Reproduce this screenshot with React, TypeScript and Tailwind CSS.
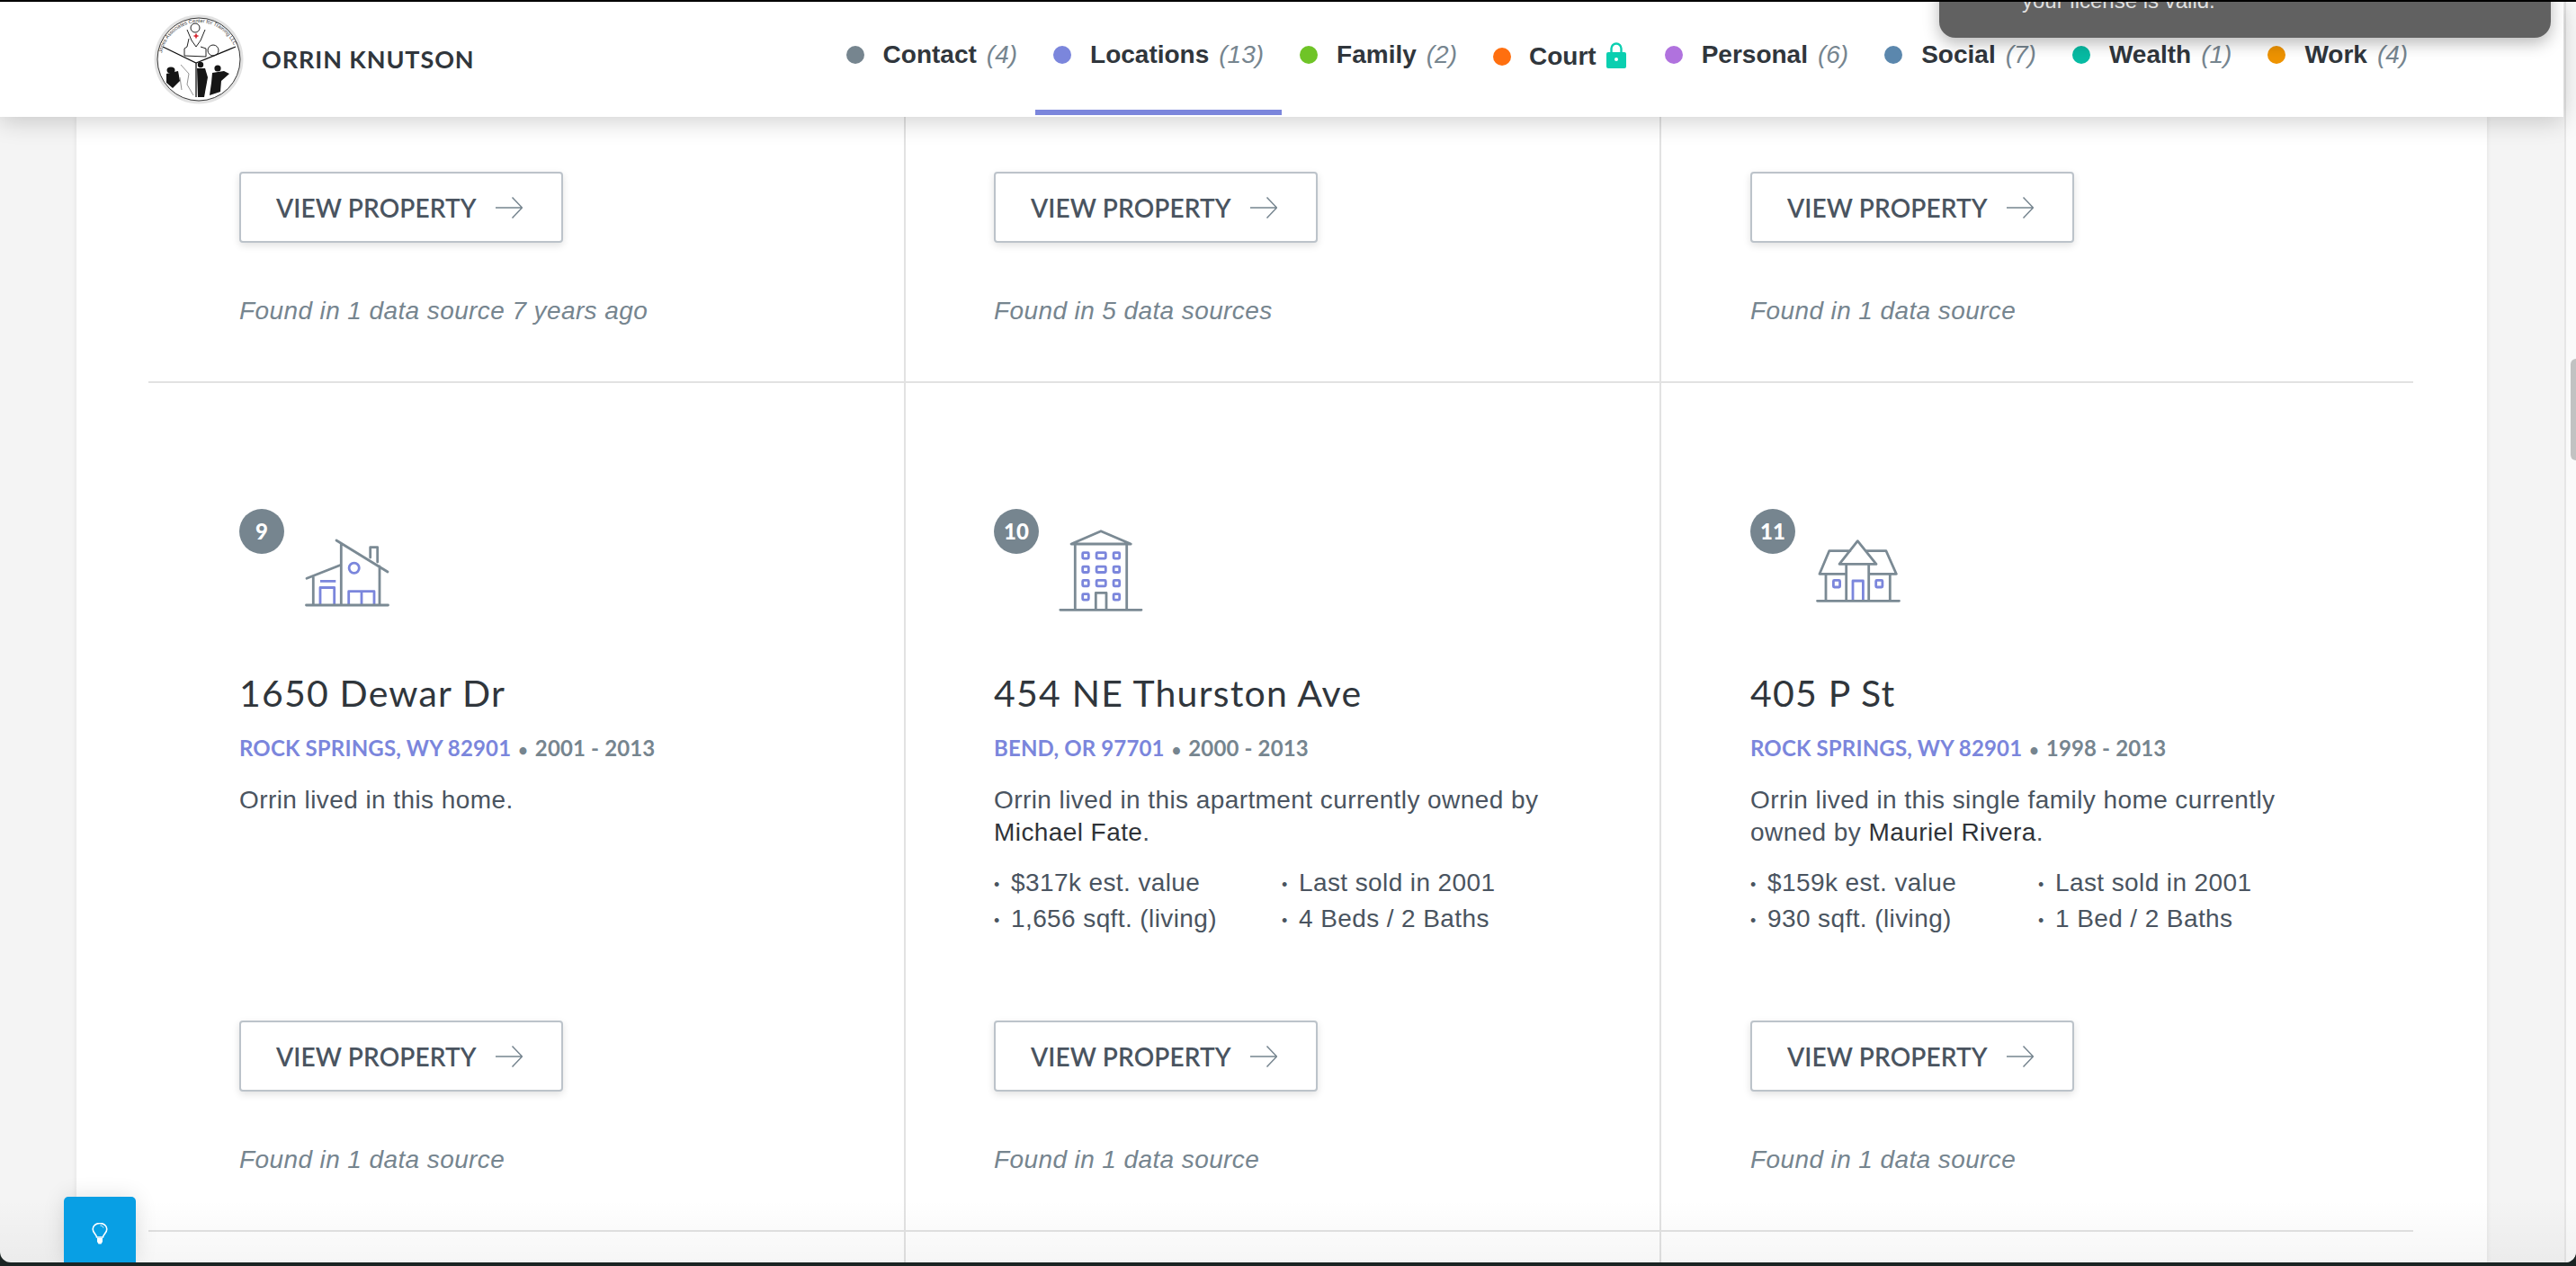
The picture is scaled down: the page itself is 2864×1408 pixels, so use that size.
import type { ReactNode } from "react";

const navItems = [
  { label: "Contact", count: 4, dot: "bg-[#76858f]" },
  { label: "Locations", count: 13, dot: "bg-[#7b86dc]", active: true },
  { label: "Family", count: 2, dot: "bg-[#6fc427]" },
  { label: "Court", dot: "bg-[#ff6f0f]", locked: true },
  { label: "Personal", count: 6, dot: "bg-[#b072de]" },
  { label: "Social", count: 7, dot: "bg-[#5b87ad]" },
  { label: "Wealth", count: 1, dot: "bg-[#07bba3]" },
  { label: "Work", count: 4, dot: "bg-[#ee9300]" },
];

const Logo = () => (
  <svg viewBox="0 0 100 100" className="w-[100px] h-[100px] shrink-0">
    <defs>
      <path id="logo-arc" d="M 9 43 A 42 42 0 0 1 91 41" />
    </defs>
    <circle cx="50" cy="50" r="49.5" fill="#e2e2e2" />
    <circle cx="50" cy="50" r="46" fill="#fff" stroke="#222" strokeWidth="0.9" />
    <text fontSize="5.8" fill="#333" fontFamily="'Liberation Sans', sans-serif">
      <textPath href="#logo-arc">Jones Associates Center for Training LLC</textPath>
    </text>
    <path d="M10 36 L47 54 L91 36 M47 54 L47 92" stroke="#111" strokeWidth="1.3" fill="none" />
    <g stroke="#222" strokeWidth="1" fill="none">
      <circle cx="46" cy="15" r="5" />
      <path d="M37 17 L42 29 L47 36 L52 29 L57 17 M39 27 L37 36 L34 38 L34 46 L58 47 L58 38 L52 36" />
      <circle cx="66" cy="40" r="6" />
    </g>
    <path d="M44.5 24 H49.5 M47 21.5 V26.5" stroke="#d5202a" strokeWidth="1.6" />
    <g fill="#151515">
      <ellipse cx="19" cy="62" rx="4.5" ry="3.5" />
      <path d="M14 66 L27 63 L29 74 L21 82 L14 76 Z" />
      <circle cx="52" cy="56" r="3.2" />
      <path d="M48 60 L57 60 L60 70 L56 92 L49 92 Z" />
      <circle cx="71" cy="60" r="3.6" />
      <path d="M65 65 L78 63 L84 66 L75 74 L74 86 L62 90 L64 76 Z" />
    </g>
    <path d="M30 56 L39 66 L37 78 L44 90 M29 70 L31 84" stroke="#777" strokeWidth="0.8" fill="none" />
  </svg>
);

const LockIcon = () => (
  <svg viewBox="0 0 22 29" className="w-[22px] h-[29px] ml-[11px] mr-[3px] -mt-[3px]">
    <path d="M5.5 13 V7 a5.5 5.5 0 0 1 11 0 V13" stroke="#0acfb0" strokeWidth="2.4" fill="none" />
    <rect x="0" y="11" width="22" height="18" rx="2" fill="#0acfb0" />
    <circle cx="11" cy="19" r="2" fill="#fff" />
  </svg>
);

const ArrowIcon = () => (
  <svg viewBox="0 0 30 24" className="w-[30px] h-[24px]" fill="none" stroke="#76858f" strokeWidth="1.5">
    <path d="M0 12 H29.5 M18.5 0.5 L29.5 12 L18.5 23.5" />
  </svg>
);

const BulbIcon = () => (
  <svg viewBox="0 0 18 24" className="w-[18px] h-[24px]" fill="none" stroke="#fff" strokeWidth="1.6">
    <path d="M5.5 16 C5 12.5 1.2 11 1.2 7 a7.8 6.6 0 0 1 15.6 0 C16.8 11 13 12.5 12.5 16 Z" />
    <path d="M6 17 H12 V21 L10.5 23.5 H7.5 L6 21 Z" fill="#fff" stroke="none" />
    <path d="M9.5 3 C11 3 12.5 4 13 5.5" strokeWidth="1" />
  </svg>
);

const grey = { fill: "none", stroke: "#7b8a94", strokeWidth: 2.8, strokeLinecap: "round", strokeLinejoin: "round" } as const;
const accent = { fill: "none", stroke: "#7b86dc", strokeWidth: 2.8, strokeLinejoin: "round" } as const;

const HouseIcon = () => (
  <svg viewBox="92 22 100 100" className="w-[100px] h-[100px]">
    <g {...accent}>
      <circle cx="152.7" cy="71.7" r="5.6" />
      <path d="M115 86.3 H132.3 M115 113 V93.5 H130.7 V113 M146.7 113 V97.7 H175 V113 M161 97.7 V113" />
    </g>
    <path
      {...grey}
      d="M99.5 113 H190.5 M133 41 L190 76 M138.3 45 V113 M181 70 V113 M100 83.3 L138 68.3 M107.3 81 V113 M170.7 60 V48.7 H178.7 V65"
    />
  </svg>
);

const BuildingIcon = () => {
  const rows = [44.7, 60.1, 75.4, 90.7];
  return (
    <svg viewBox="92 12 100 100" className="w-[100px] h-[100px]">
      <g {...accent}>
        {rows.map((y, i) => (
          <g key={y}>
            <rect x="123.7" y={y} width="6.6" height="6.4" rx="1" />
            {i < 3 && <rect x="139.1" y={y} width="10.2" height="6.4" rx="1" />}
            <rect x="158.1" y={y} width="6.6" height="6.4" rx="1" />
          </g>
        ))}
      </g>
      <path
        {...grey}
        d="M98.8 108.3 H189 M111 35 L144 20.7 L177.3 35 Z M115.3 35 V108.3 M172.7 35 V108.3 M138.3 108.3 V89.3 H150 V108.3"
      />
    </svg>
  );
};

const GableIcon = () => (
  <svg viewBox="92 12 100 100" className="w-[100px] h-[100px]">
    <g {...accent}>
      <rect x="117.4" y="75.4" width="7.2" height="7.6" rx="1" />
      <rect x="164.7" y="75.4" width="7.2" height="7.6" rx="1" />
      <path d="M139 98 V76 H150.4 V98" />
    </g>
    <path
      {...grey}
      d="M99.5 98.3 H190.5 M124 57.3 L144.3 31.7 L165 57.3 Z M136 42.7 H112.7 L102 68.3 H131.7 M154 42.7 H176 L187.3 68.3 H156.7 M109 68.3 V98.3 M131.7 57.3 V98.3 M156.7 57.3 V98.3 M180.3 68.3 V98.3"
    />
  </svg>
);

const Card = ({ foundIn, children, className }: { foundIn: string; children?: ReactNode; className: string }) => (
  <div className={`flex flex-col justify-end ${className}`}>
    {children}
    <button className="mt-auto flex items-center justify-between w-[360px] h-[79px] pl-[39px] pr-[43px] bg-white border-2 border-[#bcc3ca] rounded-[4px] shadow-[0_3px_8px_rgba(0,0,0,0.12)] font-['Lato',sans-serif] font-semibold text-[28px] text-[#4a5460] tracking-[0.1px]">
      VIEW PROPERTY
      <ArrowIcon />
    </button>
    <p className="mt-[58px] mb-[60px] h-[36px] leading-[36px] italic text-[28px] tracking-[0.4px] text-[#76858f]">{foundIn}</p>
  </div>
);

const Property = ({
  num,
  icon,
  street,
  city,
  years,
  desc,
  owner,
  facts,
}: {
  num: number;
  icon: ReactNode;
  street: string;
  city: string;
  years: string;
  desc: string;
  owner?: string;
  facts?: string[];
}) => (
  <>
    <div className="flex items-start h-[181px]">
      <span className="w-[50px] h-[50px] rounded-full bg-[#76858f] flex items-center justify-center font-['Lato',sans-serif] font-black text-[24px] text-white">
        {num}
      </span>
      <span className="ml-[17px] mt-[16px]">{icon}</span>
    </div>
    <h3 className="font-['Lato',sans-serif] text-[41px] tracking-[1.2px] leading-[48px] text-[#30363c]">{street}</h3>
    <p className="mt-[23px] font-['Lato',sans-serif] font-bold text-[24px] tracking-[0.15px] leading-[28px] text-[#76858f]">
      <span className="text-[#7b86dc]">{city}</span>
      <span className="mx-[8px] text-[18px]">•</span>
      {years}
    </p>
    <p className="mt-[24px] w-[640px] text-[28px] tracking-[0.42px] leading-[36px] text-[#4a5460]">
      {desc}
      {owner && (
        <>
          {" "}
          <span className="text-[#2f3338]">{owner}</span>.
        </>
      )}
    </p>
    {facts && (
      <ul className="mt-[19px] grid grid-cols-[320px_320px] text-[28px] tracking-[0.4px] leading-[38px] text-[#4a5460]">
        {facts.map((f) => (
          <li key={f} className="flex">
            <span className="w-[19px] text-[18px] pt-[2px]">•</span>
            {f}
          </li>
        ))}
      </ul>
    )}
  </>
);

export default function App() {
  return (
    <div className="relative h-[1408px] w-[2864px] overflow-hidden bg-[#1b2423] font-['Liberation_Sans',sans-serif]">
      <div className="h-[2px] bg-black" />
      <div className="relative h-[1402px] flex rounded-b-[12px] overflow-hidden bg-[#f4f4f4]">
        <div className="w-[2850px] flex flex-col">
          {/* Header */}
          <header className="relative z-10 h-[128px] shrink-0 bg-white flex items-center pl-[171px] shadow-[0_4px_26px_rgba(0,0,0,0.2)]">
            <Logo />
            <span className="ml-[20px] font-['Lato',sans-serif] font-bold text-[27px] tracking-[0.9px] text-[#30363c]">
              ORRIN KNUTSON
            </span>
            <nav className="ml-[393px] flex h-full">
              {navItems.map((n) => (
                <a
                  key={n.label}
                  className={`flex items-center px-[20px] h-[126px] pb-[2px] border-b-[6px] ${
                    n.active ? "border-[#7b86dc]" : "border-transparent"
                  }`}
                >
                  <span className={`flex items-center ${n.locked ? "mt-[4px]" : ""}`}>
                    <span className={`w-[20px] h-[20px] rounded-full ${n.dot}`} />
                    <span className={`${n.locked ? "ml-[20px]" : "ml-[21px]"} font-bold text-[28px] leading-[36px] text-[#30363c]`}>
                      {n.label}
                    </span>
                    {n.locked && <LockIcon />}
                    {n.count !== undefined && (
                      <span className="ml-[11px] italic text-[28px] leading-[36px] text-[#76858f]">({n.count})</span>
                    )}
                  </span>
                </a>
              ))}
            </nav>
          </header>

          {/* Results */}
          <main className="flex-1 min-h-0 pl-[85px]">
            <div className="w-[2680px] h-full bg-white pl-[80px] shadow-[0_0_6px_rgba(0,0,0,0.08)]">
              <div className="w-[2518px] grid grid-cols-[842px_840px_836px] grid-rows-[296px_944px_60px] text-[#4a5460]">
                <Card foundIn="Found in 1 data source 7 years ago" className="pl-[101px] border-r-2 border-b-2 border-[#e2e2e2] pt-[60px]" />
                <Card foundIn="Found in 5 data sources" className="pl-[98px] border-r-2 border-b-2 border-[#e2e2e2] pt-[60px]" />
                <Card foundIn="Found in 1 data source" className="pl-[99px] border-b-2 border-[#e2e2e2] pt-[60px]" />

                <Card foundIn="Found in 1 data source" className="pl-[101px] pt-[140px] border-r-2 border-b-2 border-[#e2e2e2]">
                  <Property
                    num={9}
                    icon={<HouseIcon />}
                    street="1650 Dewar Dr"
                    city="ROCK SPRINGS, WY 82901"
                    years="2001 - 2013"
                    desc="Orrin lived in this home."
                  />
                </Card>
                <Card foundIn="Found in 1 data source" className="pl-[98px] pt-[140px] border-r-2 border-b-2 border-[#e2e2e2]">
                  <Property
                    num={10}
                    icon={<BuildingIcon />}
                    street="454 NE Thurston Ave"
                    city="BEND, OR 97701"
                    years="2000 - 2013"
                    desc="Orrin lived in this apartment currently owned by"
                    owner="Michael Fate"
                    facts={["$317k est. value", "Last sold in 2001", "1,656 sqft. (living)", "4 Beds / 2 Baths"]}
                  />
                </Card>
                <Card foundIn="Found in 1 data source" className="pl-[99px] pt-[140px] border-b-2 border-[#e2e2e2]">
                  <Property
                    num={11}
                    icon={<GableIcon />}
                    street="405 P St"
                    city="ROCK SPRINGS, WY 82901"
                    years="1998 - 2013"
                    desc="Orrin lived in this single family home currently owned by"
                    owner="Mauriel Rivera"
                    facts={["$159k est. value", "Last sold in 2001", "930 sqft. (living)", "1 Bed / 2 Baths"]}
                  />
                </Card>

                <div className="border-r-2 border-[#e2e2e2]" />
                <div className="border-r-2 border-[#e2e2e2]" />
                <div />
              </div>
            </div>
          </main>
        </div>

        {/* Scrollbar gutter */}
        <div className="flex-1 bg-[#fafafa] border-l-2 border-[#e6e6e6] ml-[1px] pt-[397px] pl-[5px]">
          <div className="h-[113px] bg-[#c2c2c2] rounded-l-[6px]" />
        </div>

        {/* Bottom fade */}
        <div className="absolute inset-x-0 bottom-0 h-[70px] z-20 pointer-events-none bg-gradient-to-b from-transparent to-[rgba(0,0,0,0.035)]" />

        {/* License toast, scrolled mostly out of view */}
        <div className="absolute z-30 left-[2156px] bottom-[1362px] w-[680px] h-[100px] rounded-b-[18px] bg-[#616161] pl-[92px] text-[24px] leading-[34px] text-[#e0e0e0] shadow-[0_6px_18px_rgba(0,0,0,0.28)] flex flex-col justify-end pb-[24px]">
          your license is valid.
        </div>

        {/* Tips tab */}
        <div className="absolute z-30 left-[71px] bottom-0 w-[80px] h-[73px] rounded-t-[5px] bg-[#089fe4] flex justify-center pt-[29px] shadow-[0_0_24px_rgba(0,0,0,0.12)]">
          <BulbIcon />
        </div>
      </div>
    </div>
  );
}
